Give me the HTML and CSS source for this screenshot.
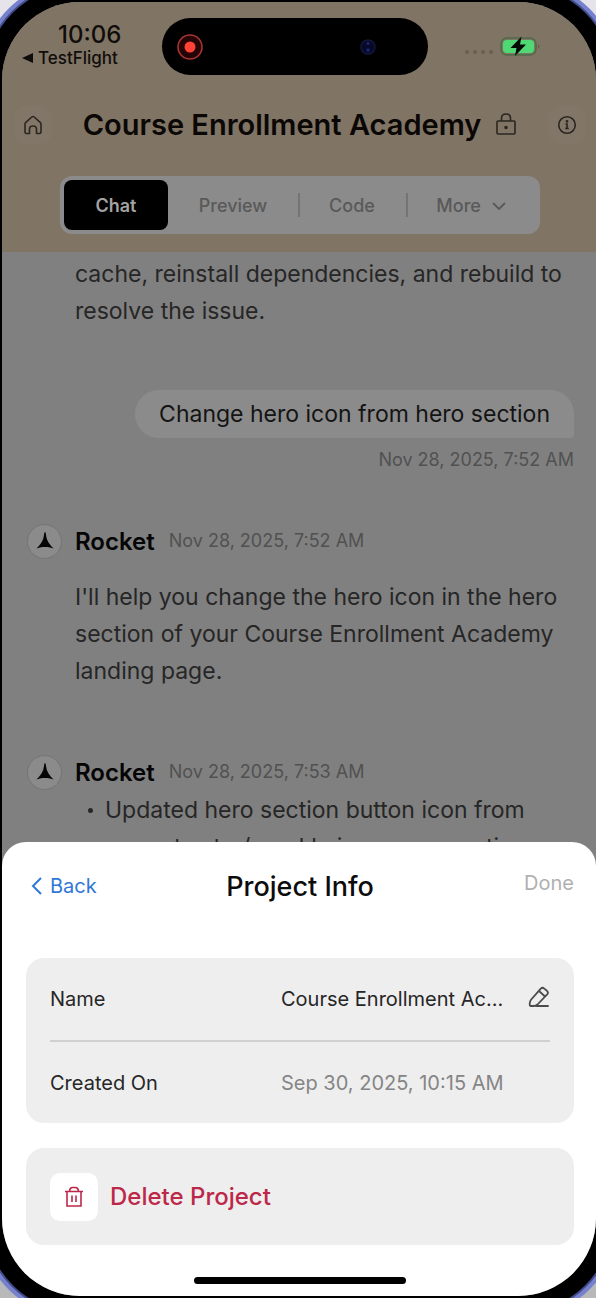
FILE: index.html
```html
<!DOCTYPE html>
<html lang="en">
<head>
<meta charset="utf-8">
<meta name="viewport" content="width=device-width, initial-scale=1">
<title>Project Info</title>
<link rel="stylesheet" href="styles.css">
</head>
<body>
<div class="screen">
  <header class="top">
    <div class="status">
      <div class="clock">
        <span class="time">10:06</span>
        <a class="return" href="#"><svg width="11" height="10" viewBox="0 0 11 10"><path d="M11 0v10L0 5z" fill="currentColor"/></svg>TestFlight</a>
      </div>
      <div class="island">
        <svg width="28" height="28" viewBox="0 0 28 28"><circle cx="14" cy="14" r="12" fill="#250405" stroke="#a83535" stroke-width="1.6"/><circle cx="14" cy="14" r="5.5" fill="#ff4238"/></svg>
        <svg width="20" height="20" viewBox="0 0 20 20"><circle cx="10" cy="10" r="7" fill="#07082a" stroke="#14163c" stroke-width="1.5"/><circle cx="10" cy="6.500" r="1.500" fill="#20266e"/><circle cx="10" cy="13" r="1.800" fill="#20266e"/></svg>
      </div>
      <div class="power">
        <svg width="30" height="20" viewBox="0 0 30 20" fill="#6a5e51"><circle cx="3" cy="16" r="2"/><circle cx="11" cy="16" r="2"/><circle cx="19" cy="16" r="2"/><circle cx="27" cy="16" r="2"/></svg>
        <svg width="40" height="20" viewBox="0 0 40 20"><rect x="1" y="2" width="35" height="17" rx="6" fill="none" stroke="#4d6b45" stroke-width="1.500"/><rect x="3" y="4" width="31" height="13" rx="4" fill="#4fd873"/><path d="M38 8.500v4q1.500-.5 1.500-2t-1.500-2z" fill="#5c6048"/><path d="M21.500.5 10.500 12h6l-1.500 8L26 8.500h-6z" fill="#050a06"/></svg>
      </div>
    </div>
    <div class="titlebar">
      <button class="round" aria-label="Home"><svg width="20" height="20" viewBox="0 0 20 20" fill="none" stroke="currentColor" stroke-width="1.600" stroke-linejoin="round"><path d="M2 9q0-1 .8-1.700L8.800 2q1.200-1 2.400 0l6 5.300Q18 8 18 9v8q0 1.500-1.500 1.500h-3V14q0-3-3.500-3t-3.500 3v4.500h-3Q2 18.500 2 17z"/></svg></button>
      <h1 class="title">Course Enrollment Academy
        <svg width="22" height="24" viewBox="0 0 22 24" fill="none" stroke="#2b2621" stroke-width="1.600"><rect x="2" y="8" width="18" height="13" rx="1"/><path d="M6.500 8V5q0-4 4.500-4t4.500 4v3"/><circle cx="11" cy="14.500" r="1" fill="#2b2621"/></svg>
      </h1>
      <button class="round" aria-label="Information"><svg width="20" height="20" viewBox="0 0 20 20" fill="none" stroke="currentColor" stroke-width="1.600"><circle cx="10" cy="10" r="8.300"/><path d="M8.500 9H10v4.500m-1.800 0h3.600"/><circle cx="10" cy="6.300" r=".6" fill="currentColor"/></svg></button>
    </div>
    <nav class="tabs">
      <button class="tab active">Chat</button>
      <button class="tab">Preview</button>
      <button class="tab">Code</button>
      <button class="tab more">More <svg width="14" height="8" viewBox="0 0 14 8" fill="none" stroke="currentColor" stroke-width="1.800"><path d="m1 1 6 6 6-6"/></svg></button>
    </nav>
  </header>

  <main class="chat">
    <p class="text">cache, reinstall dependencies, and rebuild to resolve the issue.</p>
    <div class="sent">
      <p class="bubble">Change hero icon from hero section</p>
      <time class="stamp">Nov 28, 2025, 7:52 AM</time>
    </div>
    <article class="reply">
      <div class="author">
        <span class="avatar"><svg width="18" height="18" viewBox="0 0 18 18"><path d="M9 0q.8 0 1 3 .4 4.500 2.500 7.500 2 3 5 6-4-1.600-6.500-1.500L9 15l-2 0q-2.500-.1-6.500 1.500 3-3 5-6Q7.600 7.500 8 3q.2-3 1-3z" fill="#050505"/></svg></span>
        <strong class="name">Rocket</strong>
        <time class="stamp">Nov 28, 2025, 7:52 AM</time>
      </div>
      <p class="text">I'll help you change the hero icon in the hero section of your Course Enrollment Academy landing page.</p>
    </article>
    <article class="reply tight">
      <div class="author">
        <span class="avatar"><svg width="18" height="18" viewBox="0 0 18 18"><path d="M9 0q.8 0 1 3 .4 4.500 2.500 7.500 2 3 5 6-4-1.600-6.500-1.500L9 15l-2 0q-2.500-.1-6.500 1.500 3-3 5-6Q7.600 7.500 8 3q.2-3 1-3z" fill="#050505"/></svg></span>
        <strong class="name">Rocket</strong>
        <time class="stamp">Nov 28, 2025, 7:53 AM</time>
      </div>
      <ul class="changes">
        <li>Updated hero section button icon from arrow to star/sparkle icon representing</li>
      </ul>
    </article>
  </main>

  <section class="sheet" aria-labelledby="sheet-title">
    <div class="sheet-bar">
      <button class="back"><svg width="11" height="18" viewBox="0 0 11 18" fill="none" stroke="currentColor" stroke-width="2"><path d="M10 1 2 9l8 8"/></svg>Back</button>
      <h2 class="sheet-title" id="sheet-title">Project Info</h2>
      <button class="done" disabled>Done</button>
    </div>
    <dl class="card">
      <div class="row">
        <dt>Name</dt>
        <dd class="value">Course Enrollment Ac...</dd>
        <dd class="action"><button class="edit" aria-label="Edit name"><svg width="22" height="22" viewBox="0 0 22 22" fill="none" stroke="currentColor" stroke-width="1.800" stroke-linejoin="round" stroke-linecap="round"><path d="M2.500 20q-1-.5-.8-2.500.2-2.500 1.500-4L12.800 2.600q1.700-1.700 3.500 0l2.600 2.200q1.900 1.700.3 3.500L9.500 18.500Q8 20 5.500 20zM11 5l6 5.500M8 20h12"/></svg></button></dd>
      </div>
      <div class="row">
        <dt>Created On</dt>
        <dd class="value muted">Sep 30, 2025, 10:15 AM</dd>
      </div>
    </dl>
    <button class="card delete">
      <span class="tile"><svg width="20" height="22" viewBox="0 0 20 22" fill="none" stroke="currentColor" stroke-width="1.600"><path d="M1 5.500h18M3 5.500V20h14V5.500M5.500 5q.5-3.500 3-3.500h3q2.500 0 3 3.500M8 9.500v6.500m4-6.500v6.500"/></svg></span>
      Delete Project
    </button>
    <div class="home-bar"></div>
  </section>
</div>
</body>
</html>
```

FILE: styles.css
```css
* { box-sizing: border-box; }

body {
  margin: 0;
  padding: 2px 0 2px 2px;
  height: 100vh;
  overflow: hidden;
  background: linear-gradient(#e6e4ea, #b8b7ba);
  font-family: Inter, "Liberation Sans", sans-serif;
  color: #262626;
}

h1, h2, p, ul, dl, dd { margin: 0; padding: 0; }

button {
  margin: 0;
  padding: 0;
  border: 0;
  background: none;
  font: inherit;
  color: inherit;
}

svg { flex: none; }

/* The rings are the bezel and the metal edge of the handset. */
.screen {
  display: flex;
  flex-direction: column;
  height: 100%;
  overflow: hidden;
  border-radius: 78px;
  background: #808080;
  box-shadow: 0 0 0 17px #000, 0 0 0 19px #424c8c, 0 0 0 23px #7581cc;
}

.top {
  flex: none;
  padding: 16px 10px 18px 12px;
  background: #807465;
}

.status {
  display: grid;
  grid-template-columns: 148px 266px 1fr;
  height: 58px;
}

.clock {
  display: flex;
  flex-direction: column;
  align-items: flex-start;
  padding: 4px 0 0 8px;
  color: #110d0a;
}

.time {
  padding-left: 36px;
  font-size: 24px;
  font-weight: 500;
  line-height: 26px;
}

.return {
  display: flex;
  align-items: center;
  gap: 5px;
  font-size: 17px;
  font-weight: 500;
  line-height: 20px;
  color: inherit;
  text-decoration: none;
}

.island {
  display: flex;
  align-items: center;
  justify-content: space-between;
  height: 57px;
  padding: 0 50px 0 14px;
  border-radius: 29px;
  background: #000;
}

.power {
  display: flex;
  align-items: center;
  justify-content: flex-end;
  gap: 6px;
  height: 56px;
  padding-right: 46px;
}

.titlebar {
  display: flex;
  align-items: center;
  justify-content: space-between;
  padding: 30px 0 32px;
}

.round {
  display: grid;
  place-items: center;
  width: 38px;
  height: 38px;
  border-radius: 12px;
  background: #827668;
  color: #2b2621;
}

.title {
  display: flex;
  align-items: center;
  gap: 14px;
  font-size: 29px;
  font-weight: 600;
  line-height: 38px;
  color: #0b0705;
  white-space: nowrap;
}

.tabs {
  display: flex;
  width: 480px;
  max-width: 100%;
  margin: 0 auto;
  padding: 4px;
  border-radius: 12px;
  background: #8b8b8b;
}

.tab {
  position: relative;
  flex: 130 1 0;
  height: 50px;
  font-size: 18px;
  font-weight: 500;
  color: #595959;
}

.tab.active {
  flex-grow: 104;
  border-radius: 8px;
  background: #000;
  font-weight: 600;
  color: #a3a3a3;
}

.tab:nth-child(3) { flex-grow: 108; }

.tab:nth-child(n + 3)::before {
  content: "";
  position: absolute;
  left: 0;
  top: 13px;
  width: 2px;
  height: 24px;
  background: #747474;
}

.more svg { margin-left: 6px; vertical-align: 2px; }

.chat {
  flex: 1;
  min-height: 0;
  overflow: hidden;
  padding: 4px 22px 0 25px;
}

.text {
  padding-left: 48px;
  font-size: 23px;
  line-height: 37px;
}

.sent {
  display: flex;
  flex-direction: column;
  align-items: flex-end;
  gap: 10px;
  margin-top: 60px;
}

.bubble {
  padding: 6px 24px;
  border-radius: 24px 24px 4px 24px;
  background: #8b8b8b;
  font-size: 23px;
  line-height: 36px;
  color: #141414;
}

.stamp {
  font-size: 18px;
  line-height: 24px;
  color: #515151;
}

.reply { margin-top: 51px; }

.author {
  display: flex;
  align-items: center;
  height: 36px;
  margin-bottom: 20px;
}

.avatar {
  display: grid;
  place-items: center;
  width: 35px;
  height: 35px;
  margin-right: 13px;
  border: 1px solid #747474;
  border-radius: 50%;
  background: #8b8b8b;
}

.name {
  margin-right: 14px;
  font-size: 24px;
  font-weight: 600;
  color: #050505;
}

.reply.tight { margin-top: 64px; }
.tight .author { margin-bottom: 2px; }

.changes {
  padding-left: 78px;
  font-size: 23px;
  line-height: 37px;
  list-style: none;
}

.changes li { text-indent: -17px; }
.changes li::before {
  content: "";
  display: inline-block;
  width: 5px;
  height: 5px;
  margin-right: 12px;
  border-radius: 50%;
  background: #262626;
  vertical-align: 5px;
}

.sheet {
  flex: none;
  display: flex;
  flex-direction: column;
  padding: 24px 22px 12px 24px;
  border-radius: 24px 24px 0 0;
  background: #fff;
}

.sheet-bar {
  display: grid;
  grid-template-columns: 1fr auto 1fr;
  align-items: center;
  height: 40px;
  margin-bottom: 52px;
  font-size: 20px;
}

.back {
  display: flex;
  align-items: center;
  gap: 8px;
  padding-left: 5px;
  color: #2f78d8;
}

.sheet-title {
  font-size: 27px;
  font-weight: 500;
  color: #0c0c0c;
}

.done {
  justify-self: end;
  padding-bottom: 6px;
  color: #b0b0b0;
}

.card {
  border-radius: 18px;
  background: #eee;
  padding: 0 24px;
  font-size: 20px;
}

.row {
  display: grid;
  grid-template-columns: minmax(0, 1fr) 231px 38px;
  align-items: center;
  height: 82px;
}

.row + .row { border-top: 2px solid #d0d0d0; height: 83px; }

.value { white-space: nowrap; }

.muted { color: #858585; }

.action { justify-self: end; }

.edit { display: block; color: #4b4b4b; }

.delete {
  display: flex;
  align-items: center;
  gap: 12px;
  height: 97px;
  margin-top: 25px;
  font-size: 24px;
  font-weight: 500;
  color: #bd2748;
}

.tile {
  display: grid;
  place-items: center;
  width: 48px;
  height: 48px;
  border-radius: 10px;
  background: #fff;
}

.home-bar {
  align-self: center;
  width: 212px;
  height: 7px;
  margin-top: 32px;
  border-radius: 4px;
  background: #000;
}
```
